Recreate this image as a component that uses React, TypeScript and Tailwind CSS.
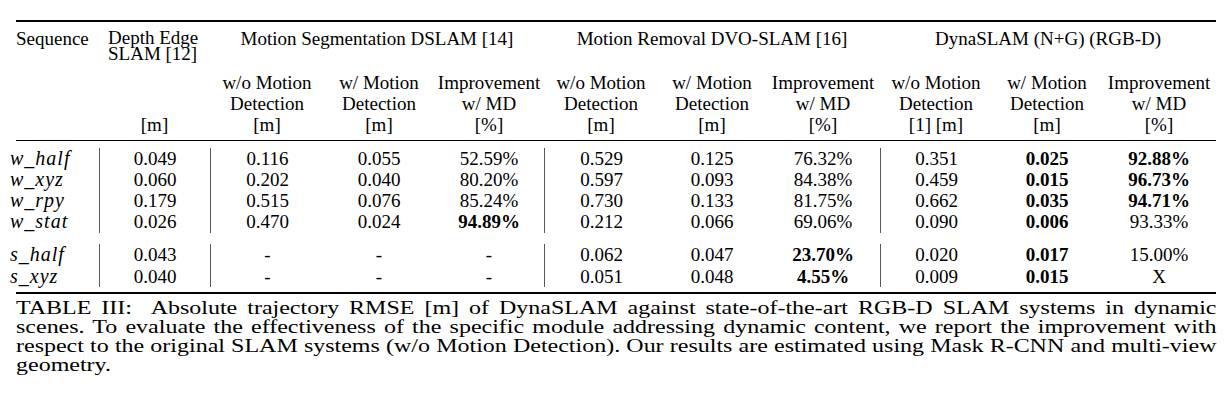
const grid =
  "grid grid-cols-[83px_111px_114px_110px_110px_114px_108px_114px_112px_110px_114px]";

type Cell = { v: string; b?: boolean };

const rowsA: { seq: string; cells: Cell[] }[] = [
  {
    seq: "w_half",
    cells: [
      { v: "0.049" }, { v: "0.116" }, { v: "0.055" }, { v: "52.59%" },
      { v: "0.529" }, { v: "0.125" }, { v: "76.32%" },
      { v: "0.351" }, { v: "0.025", b: true }, { v: "92.88%", b: true },
    ],
  },
  {
    seq: "w_xyz",
    cells: [
      { v: "0.060" }, { v: "0.202" }, { v: "0.040" }, { v: "80.20%" },
      { v: "0.597" }, { v: "0.093" }, { v: "84.38%" },
      { v: "0.459" }, { v: "0.015", b: true }, { v: "96.73%", b: true },
    ],
  },
  {
    seq: "w_rpy",
    cells: [
      { v: "0.179" }, { v: "0.515" }, { v: "0.076" }, { v: "85.24%" },
      { v: "0.730" }, { v: "0.133" }, { v: "81.75%" },
      { v: "0.662" }, { v: "0.035", b: true }, { v: "94.71%", b: true },
    ],
  },
  {
    seq: "w_stat",
    cells: [
      { v: "0.026" }, { v: "0.470" }, { v: "0.024" }, { v: "94.89%", b: true },
      { v: "0.212" }, { v: "0.066" }, { v: "69.06%" },
      { v: "0.090" }, { v: "0.006", b: true }, { v: "93.33%" },
    ],
  },
];

const rowsB: { seq: string; cells: Cell[] }[] = [
  {
    seq: "s_half",
    cells: [
      { v: "0.043" }, { v: "-" }, { v: "-" }, { v: "-" },
      { v: "0.062" }, { v: "0.047" }, { v: "23.70%", b: true },
      { v: "0.020" }, { v: "0.017", b: true }, { v: "15.00%" },
    ],
  },
  {
    seq: "s_xyz",
    cells: [
      { v: "0.040" }, { v: "-" }, { v: "-" }, { v: "-" },
      { v: "0.051" }, { v: "0.048" }, { v: "4.55%", b: true },
      { v: "0.009" }, { v: "0.015", b: true }, { v: "X" },
    ],
  },
];

// cells with a vertical rule on their left edge
const ruled = [0, 1, 4, 7];

function Block({ rows }: { rows: { seq: string; cells: Cell[] }[] }) {
  return (
    <div className={grid}>
      {rows.map((r) => (
        <div key={r.seq} className="contents">
          <div className="h-[21.33px] leading-[21.33px] italic text-[20px] tracking-[1px] -ml-[6px] whitespace-nowrap">
            {r.seq}
          </div>
          {r.cells.map((c, i) => (
            <div
              key={i}
              className={
                "h-[21.33px] leading-[21.33px] text-center " +
                (ruled.includes(i) ? "border-l border-[#5a5a5a] " : "") +
                (c.b ? "font-bold" : "")
              }
            >
              {c.v}
            </div>
          ))}
        </div>
      ))}
    </div>
  );
}

const sub = [
  ["w/o Motion", "Detection", "[m]"],
  ["w/ Motion", "Detection", "[m]"],
  ["Improvement", "w/ MD", "[%]"],
  ["w/o Motion", "Detection", "[m]"],
  ["w/ Motion", "Detection", "[m]"],
  ["Improvement", "w/ MD", "[%]"],
  ["w/o Motion", "Detection", "[1] [m]"],
  ["w/ Motion", "Detection", "[m]"],
  ["Improvement", "w/ MD", "[%]"],
];

const caption = [
  "TABLE III:\u00a0 Absolute trajectory RMSE [m] of DynaSLAM against state-of-the-art RGB-D SLAM systems in dynamic",
  "scenes. To evaluate the effectiveness of the specific module addressing dynamic content, we report the improvement with",
  "respect to the original SLAM systems (w/o Motion Detection). Our results are estimated using Mask R-CNN and multi-view",
];

export default function App() {
  return (
    <div className="w-[1225px] h-[414px] bg-white text-black font-['Liberation_Serif',serif] text-[19px] overflow-hidden">
      <div className="w-[1200px] ml-[16px] pt-[20px]">
        <div className="h-[2px] bg-black" />

        {/* header */}
        <div className={grid + " grid-rows-[50px_auto]"}>
          <div className="row-span-2 pt-[6px] leading-[21px]">Sequence</div>
          <div className="row-span-2 flex flex-col">
            <div className="pl-[9px] pt-[8px] leading-[15.5px] whitespace-nowrap">
              Depth Edge
              <br />
              SLAM [12]
            </div>
            <div className="mt-auto pb-[5px] text-center leading-[21px]">[m]</div>
          </div>
          <div className="col-span-3 pt-[6px] leading-[21px] text-center">
            Motion Segmentation DSLAM [14]
          </div>
          <div className="col-span-3 pt-[6px] leading-[21px] text-center">
            Motion Removal DVO-SLAM [16]
          </div>
          <div className="col-span-3 pt-[6px] leading-[21px] text-center">
            DynaSLAM (N+G) (RGB-D)
          </div>
          {sub.map((s, i) => (
            <div key={i} className="pb-[5px] leading-[21px] text-center whitespace-nowrap">
              {s.map((l) => (
                <div key={l}>{l}</div>
              ))}
            </div>
          ))}
        </div>

        <div className="h-px bg-black" />

        <div className="pt-[6.5px]">
          <Block rows={rowsA} />
        </div>
        <div className="mt-[11.5px]">
          <Block rows={rowsB} />
        </div>

        <div className="mt-[5px] h-[2px] bg-black" />

        {/* caption: the source sets it wide, so stretch horizontally */}
        <div className="mt-[4px] w-[976px] origin-left scale-x-[1.23] text-[19.5px] leading-[19px]">
          {caption.map((l) => (
            <div key={l} className="text-justify [text-align-last:justify] whitespace-nowrap">
              {l}
            </div>
          ))}
          <div>geometry.</div>
        </div>
      </div>
    </div>
  );
}
